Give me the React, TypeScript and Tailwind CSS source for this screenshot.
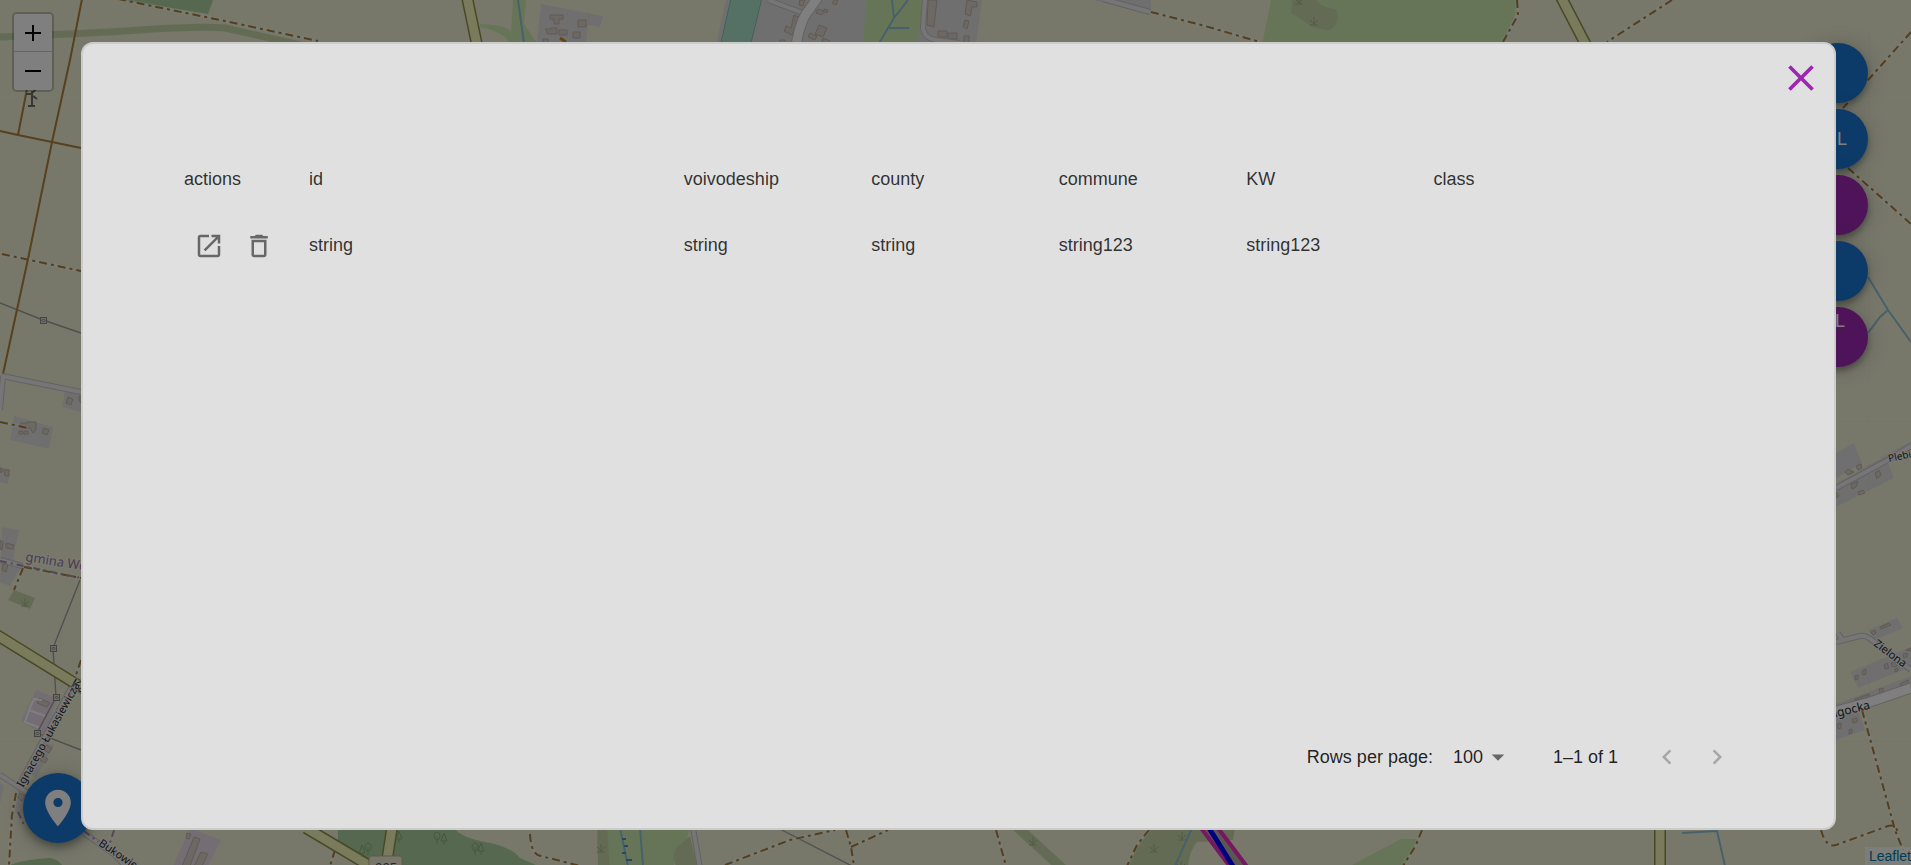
import type { ReactNode } from "react";

const COLUMNS = ["actions", "id", "voivodeship", "county", "commune", "KW", "class"];
const ROWS = [["string", "string", "string", "string123", "string123", ""]];

const FONT = "font-['Liberation_Sans',Arial,sans-serif]";

type IconProps = { d: string; className: string };

function Icon({ d, className }: IconProps) {
  return (
    <svg viewBox="0 0 24 24" className={className} fill="currentColor" aria-hidden="true">
      <path d={d} />
    </svg>
  );
}

const ICONS = {
  close: "M19 6.41 17.59 5 12 10.59 6.41 5 5 6.41 10.59 12 5 17.59 6.41 19 12 13.41 17.59 19 19 17.59 13.41 12z",
  open: "M19 19H5V5h7V3H5c-1.11 0-2 .9-2 2v14c0 1.1.89 2 2 2h14c1.1 0 2-.9 2-2v-7h-2v7zM14 3v2h3.59l-9.83 9.83 1.41 1.41L19 6.41V10h2V3h-7z",
  trash: "M6 19c0 1.1.9 2 2 2h8c1.1 0 2-.9 2-2V7H6v12zM8 9h8v10H8V9zm7.5-5-1-1h-5l-1 1H5v2h14V4z",
  pin: "M12 2C8.13 2 5 5.13 5 9c0 5.25 7 13 7 13s7-7.75 7-13c0-3.87-3.13-7-7-7zm0 9.5c-1.38 0-2.5-1.12-2.5-2.5s1.12-2.5 2.5-2.5 2.5 1.12 2.5 2.5-1.12 2.5-2.5 2.5z",
  left: "M15.41 7.41 14 6l-6 6 6 6 1.41-1.41L10.83 12z",
  right: "M10 6 8.59 7.41 13.17 12l-4.58 4.59L10 18l6-6z",
  caret: "m7 10 5 5 5-5z",
};

const RESIDENTIAL = [
  "M541 4 603 16 600 27 588 25 586 42H537Z",
  "M726 0H866L863 45H716Z",
  "M924 0H982L976 45H917Z",
  "M1092 0H1151V12L1146 11Z",
  "M65 391 81 394V412L62 407Z",
  "M14 416 53 427 49 449 10 440Z",
  "M0 467 10 469 8 484 0 482Z",
  "M2 527 19 530 13 559 21 566 10 586 0 582Z",
  "M40 740 54 745 36 778 28 772Z",
  "M18 790 27 793 22 815 15 812Z",
  "M0 782 4 786 0 804Z",
  "M1836 453 1854 443 1862 463 1836 478Z",
  "M1836 484 1911 441V446L1888 463 1894 478 1836 507Z",
  "M1868 630 1897 618 1903 628 1875 640Z",
  "M1850 672 1911 647V667L1858 688Z",
  "M1836 704 1911 676V690L1858 710 1865 730 1836 740Z",
];

const BUILDINGS = [
  "M550 15h13v4h-4v5h-5v-5h-4zM578 20h8v7h-8zM545 29h6v-1h6v6h-10v-3zM559 30h8v5h-8zM573 32h7v6h-7zM543 39h5v5h-5z",
  "M800 0h5l-2 6-4-1zM834 0h4l-2 5-4-2zM818 9l6 2-2 4-6-2zM824 9l4 1-1 3-3-1z",
  "M794 15l5 2-3 9-4 9-8-4 2-5 5 2zM819 25l8 3-4 9-8-3zM810 33l7 3-2 4-7-3zM823 38l7 3-1 4h-8zM780 40h5v4h-5z",
  "M928 0h9l-3 27-7-2zM967 0l10 2v5h-5l-2 9-5-2zM965 20l4 1-2 8-4-2zM938 31h9v6h-9zM948 33h9v6h-9zM964 36h5v7h-5z",
  "M68 397 73 399 71 405 66 403ZM79 396 81 397V403L79 401Z",
  "M21 423h6v-1h9v8l-3 3-3-5h-9zM44 428l5 2-2 5-5-2zM19 431h4v3h-4zM24 431h4v3h-4z",
  "M0 468 3 469 1 473 0 472ZM4 470h5v6h-4z",
  "M0 540l3 2-1 8-2-1zM6 543l8 2-1 4-7-1zM3 564l5 1-2 7-4-2z",
  "M39 698l11 5-3 4-10-4zM46 745l6 3-3 5-5-3zM42 755l6 4-3 4-5-3zM20 793l5 3-3 5-4-3z",
  "M1848 469l6 3-6 3-3-3zM1856 466l5-2 1 4-4 2zM1851 484l7-3-2 6-4 2zM1858 492l5-2 2 3-6 2zM1875 473l4-3 2 5-4 4zM1836 492l3 4-3 2z",
  "M1871 632l4-2 1 3-3 2zM1880 627l9-4 2 2-10 4zM1884 665l3-2 2 5-4 1zM1891 663l4-1 2 4-5 1zM1855 676l3-1v4l-3 1zM1862 671l4-2v5l-3 1zM1895 669l3-1v3l-3 1zM1903 654l4-1v4l-3 1zM1906 650l5-2v3z",
  "M1855 699l14-5v3l-14 4zM1879 689l4-1v4l-3 1zM1900 684l8-4v4l-7 3zM1837 724l4-1v5l-3 1zM1852 719l5-1v4l-4 1zM1849 730l3-1v4l-3 1z",
];

const TRACKS = [
  "M118-1 220 20 318 41",
  "M2 254 81 271",
  "M0 422 28 428",
  "M24 567 81 578M23 568 14 590",
  "M81 660 75 678",
  "M16 793 12 815 9 865",
  "M1151 12 1205 26 1260 42",
  "M1517 0 1518 15 1503 42",
  "M1672 0 1607 42",
  "M1911 32 1843 108M1848 168 1911 224",
  "M530 834Q531 855 541 856L580 866",
  "M335 850 330 866",
  "M725 865 790 840 835 830M846 830 851 847 854 866M851 847 888 830",
  "M996 830 1006 866M1149 830 1137 845 1127 866",
  "M1422 830 1416 845 1403 866",
  "M1821 830Q1826 848 1836 845L1888 826Q1895 824 1898 832",
  "M1862 710 1880 775 1895 830 1903 850",
];

const WHITE_ROADS = [
  "M768 0 803 13",
  "M1103-1 1150 12",
  "M925-1 923 28Q924 38 936 40L960 43",
  "M2 376 81 392M3 376 0 410",
  "M0 560 22 566",
  "M72 686 18 787",
  "M0 775 25 791 115 855 125 866",
  "M1836 488 1888 460 1911 446",
  "M1836 642 1860 636Q1866 635 1873 641L1911 670",
  "M1838 633 1842 640",
  "M693 828 700 868",
];

const WIDE_ROADS = ["M818-3 809 10Q801 18 796 45", "M1836 711 1870 702 1911 688"];

const YELLOW_ROADS = [
  "M467-3 477 45",
  "M1561-3 1586 45",
  "M-3 635 81 687 95 695",
  "M306 828 370 866",
  "M392 828 387 860",
  "M1660 828 1660 868",
];

const TOWERS: [number, number][] = [[43, 320], [53, 648], [56, 697], [37, 733]];

const TREES: [number, number][] = [[362, 848], [368, 847], [399, 834], [437, 836], [444, 836], [475, 847], [481, 846]];

const MARSH: [number, number][] = [[1314, 22], [1299, 1], [25, 603], [601, 849], [1033, 842], [1154, 849], [1182, 837], [1181, 866]];

function MapLabel({ x, y, angle, size, fill = "#2a2a2a", children }: {
  x: number; y: number; angle: number; size: number; fill?: string; children: ReactNode;
}) {
  return (
    <text x={x} y={y} transform={`rotate(${angle} ${x} ${y})`} fontSize={size} fill={fill}
      stroke="#fff" strokeOpacity="0.5" strokeWidth="2" paintOrder="stroke"
      fontFamily="'Noto Sans', 'Open Sans', sans-serif">
      {children}
    </text>
  );
}

function MapCanvas() {
  return (
    <svg viewBox="0 0 1911 865" preserveAspectRatio="xMidYMid slice" className="absolute inset-0 size-full bg-[#eef0d5]" fill="none" aria-hidden="true">
      {/* grass, scrub and woods */}
      <g fill="#cdebb0">
        <path d="M513 0H526L524 24 537 43H509Q506 33 480 27V24Q505 25 511 31Z" />
        <path d="M866 0H924L918 45H862Z" />
        <path d="M1271 0H1517L1515 15 1502 45H1262Z" />
        <path d="M606 828H690L686 842 674 852V866H610Z" />
        <path d="M1350 866 1401 839H1418L1404 866Z" />
      </g>
      <g fill="#c8d7ab">
        <path d="M1292 0H1316Q1322 8 1336 9L1338 17Q1336 31 1326 30 1310 28 1305 22L1291 13Z" />
        <path d="M597 828H607L610 866H598Z" />
        <path d="M690 836 676 848Q671 857 676 866H697Z" />
        <path d="M1152 828H1235L1233 840 1197 842Q1190 850 1188 866H1127L1138 845Z" />
        <path d="M14 590 35 598 30 609 8 600Z" />
      </g>
      <path d="M0 37Q80 34 140 30T225 28L305 46" stroke="#c8d7ab" strokeWidth="7" />
      <path d="M1015 825 1064 870" stroke="#c8d7ab" strokeWidth="10" />
      <g fill="#add19e">
        <path d="M123 0H213L208 14Z" />
        <path d="M338 828H453Q463 838 485 842 510 846 520 858L538 866H372L338 848Z" />
        <path d="M8 866Q20 860 50 858 58 859 63 866Z" />
      </g>

      {/* built-up areas */}
      <g fill="#e0dfdf">{RESIDENTIAL.map((d) => <path key={d} d={d} />)}</g>
      <path d="M731-2H762L750 47H720Z" fill="#aae0cb" stroke="#86c4ae" />
      <g fill="#ebdbe8">
        <path d="M36 690 57 698 45 735 21 721Z" />
        <path d="M190 828 221 840 208 866H173Z" />
      </g>
      <g fill="#d9d0c9" stroke="#c2b3a7">{BUILDINGS.map((d) => <path key={d} d={d} />)}</g>
      <path d="M194 837l6 2-10 27h-8zM201 852l7 2-6 12h-8zM187 833l4 1-2 5-3-1z" fill="#d9d0c9" stroke="#c2b3a7" />
      <path d="M45 716 29 710 34 699 42 700M29 710 25 722 40 728" stroke="#fff" strokeWidth="2" />
      <path d="M560 38 566 42" stroke="#c98a2a" strokeWidth="3" />

      {/* tile seams */}
      <path d="M269 0V45M589 0V45M1229 0V45M1549 0V45M1869 0V865M269 828V865M909 828V865M1549 828V865M0 102H81M0 741H81M1836 102H1911M1836 421H1911M1836 741H1911" stroke="#000" strokeOpacity="0.02" />

      {/* water */}
      <g stroke="#8fc0d8" strokeWidth="2">
        <path d="M518 0 524 43M892 0 894 18M908 0 894 18 878 45M889 28H909" />
        <path d="M1868 277 1888 310 1911 342M1868 333 1880 317 1888 310" />
        <path d="M1192 828 1175 866M1682 833 1717 831 1725 866M620 828 628 866M640 828 643 866" />
      </g>
      <path d="M622 839h4M622 853h4M624 846h4M626 860h6" stroke="#4a90d0" strokeWidth="2" />

      {/* power lines */}
      <path d="M0 303 43 320 81 333M80 580 53 648 56 697 37 733 81 750M778 828 852 866" stroke="#a0a09c" strokeWidth="1.4" />

      {/* tracks */}
      <g stroke="#fff" strokeOpacity="0.3" strokeWidth="4">{TRACKS.map((d) => <path key={d} d={d} />)}</g>
      <g stroke="#a87c3c" strokeWidth="2" strokeDasharray="8 4 3 4">{TRACKS.map((d) => <path key={d} d={d} />)}</g>
      <g stroke="#b0803c" strokeWidth="2">
        <path d="M82-1 70 60 52 142 28 259 3 374M27 89 18 135M0 131 18 135 52 142 81 148" />
      </g>

      {/* roads */}
      <g stroke="#c6c3c8" strokeWidth="6">{WHITE_ROADS.map((d) => <path key={d} d={d} />)}</g>
      <g stroke="#ececee" strokeWidth="4">{WHITE_ROADS.map((d) => <path key={d} d={d} />)}</g>
      <g stroke="#c6c3c8" strokeWidth="11">{WIDE_ROADS.map((d) => <path key={d} d={d} />)}</g>
      <g stroke="#fff" strokeWidth="9">{WIDE_ROADS.map((d) => <path key={d} d={d} />)}</g>
      <g stroke="#8f9348" strokeWidth="12">{YELLOW_ROADS.map((d) => <path key={d} d={d} />)}</g>
      <g stroke="#f4f6b8" strokeWidth="9">{YELLOW_ROADS.map((d) => <path key={d} d={d} />)}</g>
      <path d="M0 561 81 578M18 812 24 825M84 831 98 842M114 830 110 843" stroke="#ab8fae" strokeWidth="2" strokeDasharray="7 4 2 4" />

      {/* drawn route */}
      <path d="M1201 828 1231 868H1248L1217 828Z" fill="#b5b0a4" />
      <path d="M1201 828 1231 868M1218 828 1248 868" stroke="#f02cc4" strokeWidth="4" />
      <path d="M1209 828 1234 868" stroke="#0000ff" strokeWidth="5" />

      {TOWERS.map(([x, y]) => (
        <g key={`${x}-${y}`} stroke="#8a8a88">
          <rect x={x - 2.5} y={y - 2.5} width="6" height="6" fill="#dcdcd0" />
          <path d={`M${x - 1} ${y + 0.5}l1.5-1.5 1.5 1.5-1.5 1.5z`} />
        </g>
      ))}
      {TREES.map(([x, y], i) => (
        <g key={`${x}-${y}`} stroke="#8bb27e">
          <path d={i % 2 ? `M${x} ${y - 4}a3 4 0 1 0 .1 0M${x} ${y}v8` : `M${x} ${y - 3}l3 8h-6zM${x} ${y + 5}v4`} />
        </g>
      ))}
      {MARSH.map(([x, y]) => (
        <path key={`${x}-${y}`} d={`M${x} ${y - 5}v8M${x - 4} ${y - 2}l4 4 4-4M${x - 4} ${y + 3}h8`} stroke="#a3b78c" />
      ))}
      <path d="M32 91v15M28 106h7M26 94h5l5-5M33 96l4 3" stroke="#6e6e66" strokeWidth="2" />

      <g>
        <rect x="369" y="856" width="33" height="20" rx="2" fill="#f3efd6" stroke="#b9b58c" />
        <text x="375" y="872" fontSize="13" fill="#555" fontFamily="'Noto Sans', sans-serif">995</text>
      </g>
      <MapLabel x={25} y={561} angle={9} size={13} fill="#96759c">gmina Wo</MapLabel>
      <MapLabel x={70} y={686} angle={30} size={13}>Ka</MapLabel>
      <MapLabel x={23} y={788} angle={-61} size={11}>Ignacego Łukasiewicza</MapLabel>
      <MapLabel x={98} y={845} angle={34} size={11}>Bukowiecka</MapLabel>
      <MapLabel x={1889} y={462} angle={-12} size={10}>Plebi</MapLabel>
      <MapLabel x={1873} y={645} angle={37} size={11}>Zielona</MapLabel>
      <MapLabel x={1829} y={719} angle={-14} size={12}>Ligocka</MapLabel>
    </svg>
  );
}

function ZoomControl() {
  return (
    <div className="absolute top-3 left-3 flex w-[42px] flex-col overflow-hidden rounded-[5px] border-2 border-black/20 bg-clip-padding">
      <button type="button" aria-label="Zoom in" className="flex h-[38px] items-center justify-center border-b border-[#ccc] bg-white text-black">
        <svg viewBox="0 0 16 16" className="size-4" stroke="currentColor" strokeWidth="2"><path d="M8 0v16M0 8h16" /></svg>
      </button>
      <button type="button" aria-label="Zoom out" className="flex h-[38px] items-center justify-center bg-white text-black">
        <svg viewBox="0 0 16 16" className="size-4" stroke="currentColor" strokeWidth="2"><path d="M0 8h16" /></svg>
      </button>
    </div>
  );
}

function MapTools() {
  const base = "flex size-[60px] justify-end rounded-full text-lg font-medium leading-6 text-white shadow-[0_4px_6px_rgba(0,0,0,0.3),0_2px_22px_rgba(0,0,0,0.2)]";
  return (
    <div className="absolute top-[43px] right-[43px] flex flex-col gap-[6px]">
      <button type="button" aria-label="Tool 1" className={`${base} bg-[#1976d2]`} />
      <button type="button" className={`${base} items-center bg-[#1976d2] pr-[21px]`}>L</button>
      <button type="button" aria-label="Tool 3" className={`${base} bg-[#9c27b0]`} />
      <button type="button" aria-label="Tool 4" className={`${base} bg-[#1976d2]`} />
      <button type="button" className={`${base} items-start bg-[#9c27b0] pt-[2px] pr-[23px]`}>L</button>
    </div>
  );
}

function ParcelTable() {
  const iconButton = "flex size-[30px] items-center justify-center text-black/54";
  return (
    <table className="w-full table-fixed border-collapse text-left text-lg text-black/80">
      <colgroup>
        <col className="w-[8%]" />
        <col className="w-[24%]" />
        <col className="w-[12%]" />
        <col className="w-[12%]" />
        <col className="w-[12%]" />
        <col className="w-[12%]" />
        <col className="w-[20%]" />
      </colgroup>
      <thead>
        <tr className="h-[66px]">
          {COLUMNS.map((name) => (
            <th key={name} scope="col" className="px-3 font-normal">{name}</th>
          ))}
        </tr>
      </thead>
      <tbody>
        {ROWS.map((cells, row) => (
          <tr key={row} className="h-[66px]">
            <td className="pt-[2px] pl-[22px]">
              <div className="flex gap-5">
                <button type="button" aria-label="Open" className={iconButton}><Icon d={ICONS.open} className="size-[30px]" /></button>
                <button type="button" aria-label="Delete" className={iconButton}><Icon d={ICONS.trash} className="size-[30px]" /></button>
              </div>
            </td>
            {cells.map((cell, i) => (
              <td key={i} className="px-3">{cell}</td>
            ))}
          </tr>
        ))}
      </tbody>
    </table>
  );
}

function Pagination() {
  return (
    <div className="mt-auto flex h-[66px] items-center justify-end pr-[2px] text-lg text-black/87">
      <label htmlFor="page-size">Rows per page:</label>
      <div className="relative ml-5 flex items-center">
        <select id="page-size" defaultValue="100" className="h-8 w-[60px] appearance-none bg-transparent">
          <option>100</option>
        </select>
        <Icon d={ICONS.caret} className="pointer-events-none absolute right-0 size-[30px] text-black/54" />
      </div>
      <span className="ml-10">1–1 of 1</span>
      <div className="ml-[34px] flex gap-5 text-black/26">
        <button type="button" disabled aria-label="Previous page"><Icon d={ICONS.left} className="size-[30px]" /></button>
        <button type="button" disabled aria-label="Next page"><Icon d={ICONS.right} className="size-[30px]" /></button>
      </div>
    </div>
  );
}

export default function App() {
  return (
    <main className={`relative h-screen overflow-hidden ${FONT}`}>
      <MapCanvas />
      <ZoomControl />
      <MapTools />
      <button type="button" aria-label="Locate" className="absolute bottom-[22px] left-[23px] flex size-[70px] items-center justify-center rounded-full bg-[#1976d2] text-white shadow-[0_4px_8px_rgba(0,0,0,0.35),0_2px_22px_rgba(0,0,0,0.2)]">
        <Icon d={ICONS.pin} className="size-11" />
      </button>
      <a href="#leaflet" className="absolute right-0 bottom-0 bg-white/70 pl-1 text-sm leading-[18px] text-[#0078a8]">Leaflet</a>

      <div className="absolute inset-0 flex bg-black/50 pt-[42px] pr-[75px] pb-[35px] pl-[81px]">
        <section role="dialog" aria-modal="true" className="flex flex-1 flex-col rounded-xl border-2 border-[#ccc] bg-[#e0e0e0]">
          <div className="flex justify-end pt-3 pr-[11px]">
            <button type="button" aria-label="Close" className="text-[#9c27b0]"><Icon d={ICONS.close} className="size-11" /></button>
          </div>
          <div className="flex flex-1 flex-col pt-[46px] pr-[100px] pb-[38px] pl-[89px]">
            <ParcelTable />
            <Pagination />
          </div>
        </section>
      </div>
    </main>
  );
}
